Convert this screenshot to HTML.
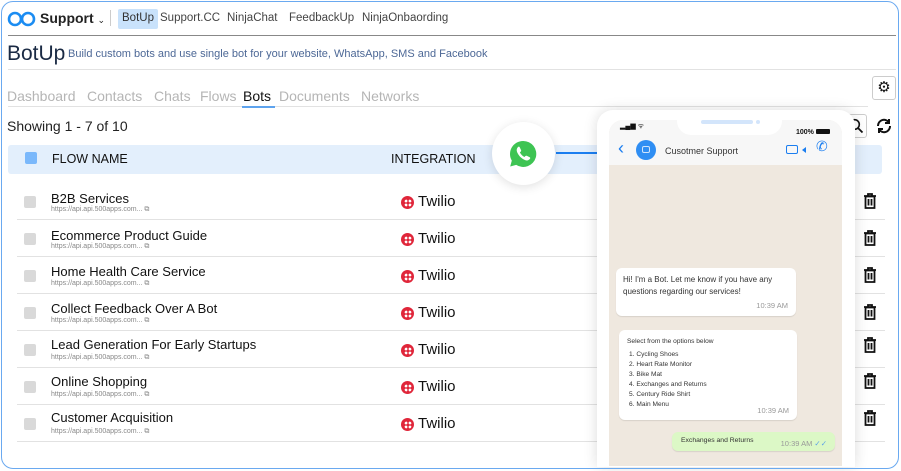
<!DOCTYPE html>
<html><head><meta charset="utf-8"><style>
*{box-sizing:border-box;margin:0;padding:0}
html,body{width:901px;height:471px;overflow:hidden}
body{background:#fff;font-family:"Liberation Sans",sans-serif;position:relative;color:#111}
.frame{position:absolute;left:1px;top:1px;width:898px;height:468px;border:1.5px solid #6aa9f0;border-radius:12px;z-index:5;pointer-events:none}
.a{position:absolute;white-space:nowrap}
.hl{position:absolute;height:1px;background:#e2e2e2}
.tab{font-size:14px;color:#b5b5b5}
.row .n{font-size:13px;color:#111}
.cb{position:absolute;left:24px;width:12px;height:12px;border-radius:2px;background:#d9d9d9}
.url{font-size:7px;color:#888}
.tw{position:absolute;left:401px;width:13px;height:13px;border-radius:50%;background:#e0263a}
.tw:after{content:"";position:absolute;left:2.5px;top:2.5px;width:8px;height:8px;background:radial-gradient(circle,#fff 1.3px,transparent 1.5px) 0 0/4px 4px;border-radius:50%}
.twt{position:absolute;left:418px;font-size:15px}
.bub{position:absolute;background:#fff;border-radius:6px;font-size:8px;color:#333;box-shadow:0 1px 1px rgba(0,0,0,.1)}
.tm{position:absolute;right:8px;bottom:4px;font-size:7.5px;color:#999}
</style></head><body>
<div class="frame"></div>
<svg class="a" style="left:7px;top:11px" width="30" height="16" viewBox="0 0 30 16"><circle cx="8" cy="8" r="6" fill="none" stroke="#1b8cf2" stroke-width="2.6"/><circle cx="21" cy="8" r="6" fill="none" stroke="#1b8cf2" stroke-width="2.6"/></svg>
<div class="a" style="left:40px;top:10px;font-size:14px;font-weight:bold;color:#222">Support <span style="font-size:9px;font-weight:normal">&#8964;</span></div>
<div class="a" style="left:110px;top:10px;width:1px;height:16px;background:#ccc"></div>
<div class="a" style="left:118px;top:9px;width:40px;height:20px;background:#c9e2fb;border-radius:2px"></div>
<div class="a" style="left:122px;top:12px;font-size:11.5px;color:#333">BotUp</div>
<div class="a" style="left:160px;top:12px;font-size:11.5px;color:#444">Support.CC</div>
<div class="a" style="left:227px;top:12px;font-size:11.5px;color:#444">NinjaChat</div>
<div class="a" style="left:289px;top:12px;font-size:11.5px;color:#444">FeedbackUp</div>
<div class="a" style="left:362px;top:12px;font-size:11.5px;color:#444">NinjaOnbaording</div>
<div class="hl" style="left:8px;top:35px;width:888px;background:#888"></div>
<div class="a" style="left:7px;top:42px;font-size:21px;color:#1a2a44">BotUp</div>
<div class="a" style="left:68px;top:48px;font-size:11px;color:#4d6896">Build custom bots and use single bot for your website, WhatsApp, SMS and Facebook</div>
<div class="hl" style="left:8px;top:69px;width:888px"></div>
<div class="a" style="left:872px;top:76px;width:24px;height:24px;border:1px solid #ccc;border-radius:3px;text-align:center;line-height:22px;font-size:15px">&#9881;</div>
<div class="a tab" style="left:7px;top:88px">Dashboard</div>
<div class="a tab" style="left:87px;top:88px">Contacts</div>
<div class="a tab" style="left:154px;top:88px">Chats</div>
<div class="a tab" style="left:200px;top:88px">Flows</div>
<div class="a tab" style="left:243px;top:88px;color:#111">Bots</div>
<div class="a tab" style="left:279px;top:88px">Documents</div>
<div class="a tab" style="left:361px;top:88px">Networks</div>
<div class="hl" style="left:8px;top:106px;width:860px"></div>
<div class="a" style="left:242px;top:106px;width:33px;height:2px;background:#5da3ee"></div>
<div class="a" style="left:7px;top:118px;font-size:14px;color:#222">Showing 1 - 7 of 10</div>
<div class="a" style="left:843px;top:114px;width:24px;height:24px;border:1px solid #ccc;border-radius:3px"></div>
<svg class="a" style="left:848px;top:118px" width="16" height="16" viewBox="0 0 16 16"><circle cx="6.5" cy="6.5" r="4.8" fill="none" stroke="#111" stroke-width="1.6"/><path d="M10 10l4.5 4.5" stroke="#111" stroke-width="1.8"/></svg>
<svg class="a" style="left:875px;top:117px" width="18" height="18" viewBox="0 0 18 18"><path d="M15 9A6 6 0 0 1 4 12.5M3 9A6 6 0 0 1 14 5.5" fill="none" stroke="#111" stroke-width="2"/><path d="M14 2v4h-4M4 16v-4h4" fill="none" stroke="#111" stroke-width="2"/></svg>
<div class="a" style="left:8px;top:145px;width:874px;height:29px;background:#e3effc;border-radius:3px"></div>
<div class="a" style="left:25px;top:152px;width:12px;height:12px;border-radius:2px;background:#7ab8fb"></div>
<div class="a" style="left:52px;top:152px;font-size:12.5px;color:#111">FLOW NAME</div>
<div class="a" style="left:391px;top:152px;font-size:12.5px;color:#111">INTEGRATION</div>
<div class="row">
<div class="cb" style="top:196px"></div><div class="a n" style="left:51px;top:191px">B2B Services</div><div class="a url" style="left:51px;top:206px">https://api.api.500apps.com... ⧉</div><div class="tw" style="top:196px"></div><div class="a twt" style="top:193px">Twilio</div><div class="hl" style="left:17px;top:219px;width:580px"></div>
<div class="cb" style="top:233px"></div><div class="a n" style="left:51px;top:228px">Ecommerce Product Guide</div><div class="a url" style="left:51px;top:243px">https://api.api.500apps.com... ⧉</div><div class="tw" style="top:233px"></div><div class="a twt" style="top:230px">Twilio</div><div class="hl" style="left:17px;top:256px;width:580px"></div>
<div class="cb" style="top:270px"></div><div class="a n" style="left:51px;top:264px">Home Health Care Service</div><div class="a url" style="left:51px;top:280px">https://api.api.500apps.com... ⧉</div><div class="tw" style="top:270px"></div><div class="a twt" style="top:267px">Twilio</div><div class="hl" style="left:17px;top:293px;width:580px"></div>
<div class="cb" style="top:307px"></div><div class="a n" style="left:51px;top:301px">Collect Feedback Over A Bot</div><div class="a url" style="left:51px;top:317px">https://api.api.500apps.com... ⧉</div><div class="tw" style="top:307px"></div><div class="a twt" style="top:304px">Twilio</div><div class="hl" style="left:17px;top:330px;width:580px"></div>
<div class="cb" style="top:344px"></div><div class="a n" style="left:51px;top:337px">Lead Generation For Early Startups</div><div class="a url" style="left:51px;top:354px">https://api.api.500apps.com... ⧉</div><div class="tw" style="top:344px"></div><div class="a twt" style="top:341px">Twilio</div><div class="hl" style="left:17px;top:367px;width:580px"></div>
<div class="cb" style="top:381px"></div><div class="a n" style="left:51px;top:374px">Online Shopping</div><div class="a url" style="left:51px;top:391px">https://api.api.500apps.com... ⧉</div><div class="tw" style="top:381px"></div><div class="a twt" style="top:378px">Twilio</div><div class="hl" style="left:17px;top:404px;width:580px"></div>
<div class="cb" style="top:418px"></div><div class="a n" style="left:51px;top:410px">Customer Acquisition</div><div class="a url" style="left:51px;top:428px">https://api.api.500apps.com... ⧉</div><div class="tw" style="top:418px"></div><div class="a twt" style="top:415px">Twilio</div><div class="hl" style="left:17px;top:441px;width:580px"></div>
</div>
<div class="hl" style="left:840px;top:219px;width:45px"></div><div class="hl" style="left:840px;top:256px;width:45px"></div><div class="hl" style="left:840px;top:293px;width:45px"></div><div class="hl" style="left:840px;top:330px;width:45px"></div><div class="hl" style="left:840px;top:367px;width:45px"></div><div class="hl" style="left:840px;top:404px;width:45px"></div><div class="hl" style="left:840px;top:441px;width:45px"></div>
<svg width="0" height="0" style="position:absolute"><defs><symbol id="tr" viewBox="0 0 14 16"><path d="M1 3h12M5 3V1h4v2M2.5 3.5h9v11.5h-9z M5.5 6v6.5M8.5 6v6.5" fill="none" stroke="#111" stroke-width="1.8"/></symbol></defs></svg>
<svg class="a" style="left:863px;top:193px" width="14" height="16"><use href="#tr"/></svg>
<svg class="a" style="left:863px;top:230px" width="14" height="16"><use href="#tr"/></svg>
<svg class="a" style="left:863px;top:267px" width="14" height="16"><use href="#tr"/></svg>
<svg class="a" style="left:863px;top:304px" width="14" height="16"><use href="#tr"/></svg>
<svg class="a" style="left:863px;top:337px" width="14" height="16"><use href="#tr"/></svg>
<svg class="a" style="left:863px;top:373px" width="14" height="16"><use href="#tr"/></svg>
<svg class="a" style="left:863px;top:410px" width="14" height="16"><use href="#tr"/></svg>
<div class="a" style="left:556px;top:152px;width:45px;height:2px;background:#1b7ef0"></div>
<div class="a" style="left:492px;top:122px;width:63px;height:63px;border-radius:50%;background:#fff;box-shadow:0 2px 10px rgba(0,0,0,.12)"></div>
<svg class="a" style="left:505px;top:136px" width="36" height="36" viewBox="0 0 36 36"><path d="M18 3a15 15 0 0 0-13 22.5L3 33l7.8-2A15 15 0 1 0 18 3z" fill="#fff"/><path d="M18 5a13 13 0 0 0-11.2 19.6L5.2 30.5l6-1.6A13 13 0 1 0 18 5z" fill="#3ec453"/><path d="M13 11c.6-.5 1.4-.4 1.7.2l1.4 3c.2.5 0 1-.4 1.4l-.8.8c.9 2 2.5 3.6 4.5 4.6l.9-.9c.4-.4.9-.5 1.4-.3l3 1.4c.6.3.7 1.1.2 1.7-1.3 1.6-3 2-5 1.1-3.6-1.6-6.3-4.3-7.8-7.9-.8-2-.4-3.7.9-5.1z" fill="#fff"/></svg>
<div class="a" style="left:597px;top:110px;width:258px;height:357px;background:#fff;border-radius:16px 16px 0 0;box-shadow:0 0 14px rgba(0,0,0,.14)"></div>
<div class="a" style="left:609px;top:120px;width:233px;height:346px;background:#efe8df;border-radius:14px 14px 0 0;overflow:hidden">
<div class="a" style="left:0;top:0;width:233px;height:45px;background:#f7f7f7"></div>
<div class="a" style="left:68px;top:0;width:105px;height:15px;background:#fff;border-radius:0 0 14px 14px"></div>
<div class="a" style="left:92px;top:0px;width:52px;height:4px;background:#d3e5fb;border-radius:2px"></div>
<div class="a" style="left:147px;top:0px;width:4px;height:4px;background:#d3e5fb;border-radius:50%"></div>
<div class="a" style="left:11px;top:2px;font-size:7px;color:#111">▂▄▆ ᯤ</div>
<div class="a" style="left:187px;top:9px;font-size:7px;color:#111;font-weight:bold">100% <span style="display:inline-block;width:14px;height:5px;background:#111;border-radius:1px"></span></div>
<div class="a" style="left:9px;top:19px;font-size:18px;color:#1b7ef0;line-height:18px">&#8249;</div>
<div class="a" style="left:27px;top:20px;width:20px;height:20px;border-radius:50%;background:#2f8ef3"></div>
<div class="a" style="left:33px;top:26px;width:8px;height:7px;border:1px solid #cfe4fc;border-radius:2px"></div>
<div class="a" style="left:56px;top:26px;font-size:9px;color:#333">Cusotmer Support</div>
<div class="a" style="left:177px;top:25px;width:12px;height:9px;border:1px solid #1b7ef0;border-radius:2px"></div>
<div class="a" style="left:190px;top:27px;width:0;height:0;border:3px solid transparent;border-right:4px solid #1b7ef0"></div>
<div class="a" style="left:207px;top:18px;font-size:14px;color:#1b7ef0">&#9990;</div>
</div>
<div class="bub" style="left:616px;top:268px;width:180px;height:48px;padding:6px 7px;line-height:12px">Hi! I'm a Bot. Let me know if you have any questions regarding our services!<div class="tm">10:39 AM</div></div>
<div class="bub" style="left:619px;top:330px;width:178px;height:90px;padding:7px 8px;font-size:6.6px;line-height:10px">Select from the options below<div style="padding-left:2px;margin-top:3px">1. Cycling Shoes<br>2. Heart Rate Monitor<br>3. Bike Mat<br>4. Exchanges and Returns<br>5. Century Ride Shirt<br>6. Main Menu</div><div class="tm">10:39 AM</div></div>
<div class="bub" style="left:672px;top:432px;width:163px;height:19px;background:#dcf8c6;font-size:6.8px;padding:5px 9px">Exchanges and Returns<div class="tm" style="bottom:3px">10:39 AM <span style="color:#5aa0e8">✓✓</span></div></div>
</body></html>
